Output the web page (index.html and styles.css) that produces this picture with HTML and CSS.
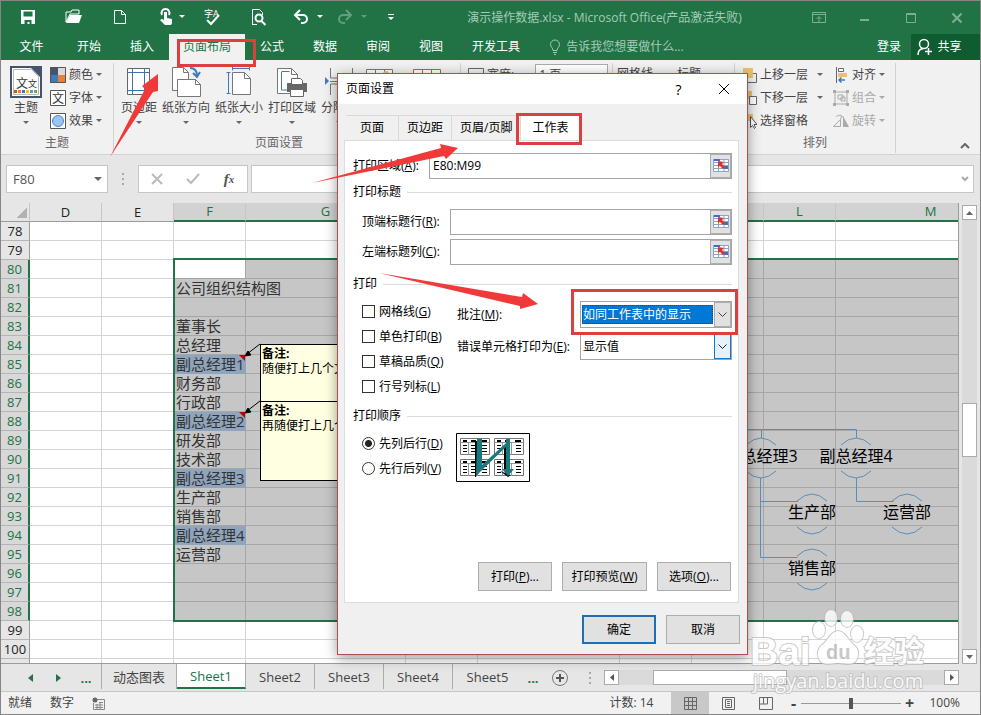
FILE: index.html
```html
<!DOCTYPE html>
<html lang="zh-CN">
<head>
  <meta charset="UTF-8">
  <title>演示操作数据.xlsx - Microsoft Office</title>
  <link rel="stylesheet" href="styles.css">
</head>
<body>
<div class="app">

<header class="titlebar">
  <div class="qat">
    <button aria-label="保存"><svg width="46" height="34" viewBox="0 0 46 34"><path d="M16 9h14v14H16z" fill="#fff"/><path d="M18.500 10.500h9v5h-9zM19.500 19h7v4h-2v-2h-2v2h-3z" fill="#217346"/></svg></button>
    <button aria-label="打开"><svg width="46" height="34" viewBox="0 0 46 34"><path d="M15 21V11h5l1-2h7v4h-9z" fill="none" stroke="#fff"/><path d="M15 22l4-8h12l-3 8z" fill="#fff"/></svg></button>
    <button aria-label="新建"><svg width="46" height="34" viewBox="0 0 46 34"><path d="M17.500 9.500h7l4 4v9h-11zM24.500 9.500v4h4" fill="none" stroke="#fff"/></svg></button>
    <button aria-label="触摸模式"><svg width="46" height="34" viewBox="0 0 46 34"><path d="M19 14a4 4 0 1 1 7 0" fill="none" stroke="#fff" stroke-width="2"/><path d="M21 11h3v6l5 1v4l-1 2h-6l-5-5 2-1 2 1z" fill="#fff"/><path d="M36 14h6l-3 3z" fill="#fff"/></svg></button>
    <button aria-label="拼写检查"><svg width="46" height="34" viewBox="0 0 46 34"><text x="15" y="16" font-size="9" fill="#fff">字A</text><path d="M18 19l4 4 8-9" fill="none" stroke="#fff" stroke-width="2"/></svg></button>
    <button aria-label="打印预览"><svg width="46" height="34" viewBox="0 0 46 34"><path d="M17.500 23V8.500h7l3 3V14M17 23.500h5" fill="none" stroke="#fff"/><circle cx="24" cy="17" r="3.500" fill="none" stroke="#fff" stroke-width="2"/><path d="M26.500 20l4 4" stroke="#fff" stroke-width="2"/></svg></button>
    <button class="narrow" aria-label="撤消"><svg width="44" height="34" viewBox="0 0 44 34"><path d="M19 9l-5 5 5 5M15 14h7a4 4 0 0 1 0 8h-2" fill="none" stroke="#fff" stroke-width="2"/><path d="M36 14h6l-3 3z" fill="#fff"/></svg></button>
    <button class="narrow dim" aria-label="恢复"><svg width="44" height="34" viewBox="0 0 44 34"><path d="M21 9l5 5-5 5M25 14h-7a4 4 0 0 0 0 8h2" fill="none" stroke="#fff" stroke-width="2"/><path d="M36 14h6l-3 3z" fill="#fff"/></svg></button>
    <button class="narrow" aria-label="自定义快速访问工具栏"><svg width="44" height="34" viewBox="0 0 44 34"><path d="M19 13.500h6" stroke="#fff"/><path d="M19 16h6l-3 3z" fill="#fff"/></svg></button>
  </div>
  <div class="title">演示操作数据.xlsx - Microsoft Office(产品激活失败)</div>
  <div class="winbtns">
    <button aria-label="功能区显示选项"><svg width="14" height="12" viewBox="0 0 14 12"><path d="M.5.5h13v10H.5zM.5 2.500h13M7 10V5M4.500 7L7 4.500 9.500 7" fill="none" stroke="currentColor"/></svg></button>
    <button aria-label="最小化"><svg width="10" height="12" viewBox="0 0 10 12"><path d="M0 8h9" stroke="currentColor" stroke-width="2"/></svg></button>
    <button aria-label="最大化"><svg width="10" height="12" viewBox="0 0 10 12"><path d="M.5 1.500h9v9h-9zM0 2.500h10" fill="none" stroke="currentColor"/></svg></button>
    <button aria-label="关闭"><svg width="10" height="12" viewBox="0 0 10 12"><path d="M.5 1.500l9 9M9.500 1.500l-9 9" stroke="currentColor" stroke-width="2"/></svg></button>
  </div>
</header>

<nav class="tabs">
  <button class="file">文件</button>
  <button>开始</button>
  <button>插入</button>
  <button class="active">页面布局</button>
  <button>公式</button>
  <button>数据</button>
  <button>审阅</button>
  <button>视图</button>
  <button>开发工具</button>
  <label class="tellme">
    <svg width="12" height="16" viewBox="0 0 12 16"><path d="M4 11.500C4 9 1.500 8 1.500 5.500a4.500 4.500 0 0 1 9 0C10.500 8 8 9 8 11.500zM4 13.500h4M5 15.500h2" fill="none" stroke="currentColor"/></svg>
    <input type="text" placeholder="告诉我您想要做什么..." aria-label="告诉我您想要做什么">
  </label>
  <button class="login">登录</button>
  <button class="share"><svg width="16" height="18" viewBox="0 0 16 18"><circle cx="7" cy="6" r="4.500" fill="none" stroke="#fff" stroke-width="1.500"/><path d="M1 17c0-4 2-6 5-6.500M8 13.500h7M11.500 10v7" fill="none" stroke="#fff" stroke-width="1.500"/></svg>共享</button>
</nav>

<section class="ribbon">
  <div class="group g-theme">
    <div class="tools">
      <button class="big">
        <svg width="32" height="32" viewBox="0 0 32 32"><path d="M1 1h30v30H1z" fill="#fff" stroke="#44546a" stroke-width="2"/><path d="M3.500 3.500h18l7 7v18h-25z" fill="#fff" stroke="#bbb"/><path d="M21 2h9v9z" fill="#44546a"/><text x="6" y="22" font-size="12" fill="#333">文</text><text x="18" y="21" font-size="9" fill="#333">文</text><path d="M4 24h3v3H4z" fill="#c55a11"/><path d="M8 24h3v3H8z" fill="#ed7d31"/><path d="M12 24h3v3h-3z" fill="#4472c4"/><path d="M16 24h3v3h-3z" fill="#ffc000"/><path d="M20 24h3v3h-3z" fill="#5b9bd5"/><path d="M24 24h3v3h-3z" fill="#70ad47"/></svg>
        <span>主题</span><i class="caret"></i>
      </button>
      <div class="stack">
        <button><svg width="16" height="16" viewBox="0 0 16 16"><path d="M0 0h8v8H0z" fill="#44546a"/><path d="M8 0h8v8H8z" fill="#d9d9d9"/><path d="M0 8h8v8H0z" fill="#3d7ac0"/><path d="M8 8h8v8H8z" fill="#ed7d31"/><path d="M.5.5h15v15H.5z" fill="none" stroke="#555"/></svg><span>颜色</span><i class="caret"></i></button>
        <button><svg width="16" height="16" viewBox="0 0 16 16"><path d="M.5.5h15v15H.5z" fill="#fff" stroke="#555"/><text x="2" y="13" font-size="12" fill="#333">文</text></svg><span>字体</span><i class="caret"></i></button>
        <button><svg width="16" height="16" viewBox="0 0 16 16"><path d="M.5.5h15v15H.5z" fill="#fff" stroke="#555"/><circle cx="8" cy="8" r="5.500" fill="#9dc3f0" stroke="#4a86c8"/></svg><span>效果</span><i class="caret"></i></button>
      </div>
    </div>
    <div class="caption">主题</div>
  </div>
  <div class="group g-page">
    <div class="tools">
      <button class="big"><svg width="24" height="32" viewBox="0 0 24 32"><path d="M.5 2.500h22v26H.5z" fill="#fff" stroke="#666"/><path d="M5.500 3v25M17.500 3v25M1 6.500h21M1 24.500h21" stroke="#4472a8"/></svg><span>页边距</span><i class="caret"></i></button>
      <button class="big"><svg width="30" height="32" viewBox="0 0 30 32"><path d="M1.500 1.500h11l5 5v18h-16z" fill="#fff" stroke="#777"/><path d="M6.500 13.500h18l5 5v12h-23z" fill="#fff" stroke="#777"/><path d="M12.500 1.500v5h5M24.500 13.500v5h5" fill="none" stroke="#777"/><path d="M19 2c4 0 7 2 7 8M22 7l4 4 3-5" fill="none" stroke="#3d7ac0" stroke-width="2"/></svg><span>纸张方向</span><i class="caret"></i></button>
      <button class="big"><svg width="26" height="32" viewBox="0 0 26 32"><path d="M6.500 6.500h12l6 6v16h-18z" fill="#fff" stroke="#777"/><path d="M18.500 6.500v6h6" fill="none" stroke="#777"/><path d="M6 2.500h18M6.500.5v4M23.500.5v4M2.500 6v22M.5 6.500h4M.5 27.500h4" stroke="#3d7ac0"/></svg><span>纸张大小</span><i class="caret"></i></button>
      <button class="big"><svg width="30" height="32" viewBox="0 0 30 32"><path d="M.5 2.500h14l6 6v19H.5z" fill="#fff" stroke="#777"/><path d="M14.500 2.500v6h6" fill="none" stroke="#777"/><path d="M4.500 6v18h7M4.500 5.500h8" fill="none" stroke="#3d7ac0"/><path d="M10 17h20v9H10z" fill="#666"/><path d="M14.500 12.500h9l2 2v4h-11zM13.500 23.500h13v7h-13z" fill="#fff" stroke="#666"/></svg><span>打印区域</span><i class="caret"></i></button>
      <button class="big"><svg width="28" height="32" viewBox="0 0 28 32"><path d="M5.500 2v10h22V2M5.500 29V18h22v11M5 15.500h22" fill="none" stroke="#777"/><path d="M0 11l4 4-4 4z" fill="#3d7ac0"/></svg><span>分隔符</span><i class="caret"></i></button>
      <button class="big"><svg width="28" height="32" viewBox="0 0 28 32"><path d="M.5 3.500h26v24H.5zM9.500 3v24M18.500 3v24" fill="#fff" stroke="#777"/><circle cx="20" cy="8" r="3" fill="#e8b98a"/></svg><span>背景</span></button>
      <button class="big"><svg width="28" height="32" viewBox="0 0 28 32"><path d="M.5 3.500h27v24H.5zM9.500 3v24M18.500 3v24" fill="#fff" stroke="#c0603a"/></svg><span>打印标题</span></button>
    </div>
    <div class="caption">页面设置</div>
  </div>
  <div class="group g-scale">
    <div class="stack">
      <label><svg width="16" height="16" viewBox="0 0 16 16"><path d="M.5 1.500h15v5H.5zM3 9.500h10" fill="none" stroke="#666"/></svg><span>宽度:</span><select><option>1 页</option></select></label>
    </div>
  </div>
  <div class="group g-options">
    <div class="heads"><span>网格线</span><span>标题</span></div>
  </div>
  <div class="group g-arrange">
    <div class="tools">
      <div class="stack wide">
        <button><svg width="16" height="16" viewBox="0 0 16 16"><path d="M2 1h10v10H2z" fill="#eec06f"/><path d="M12 6.500h3.500v9h-9V12" fill="none" stroke="#666"/></svg><span>上移一层</span><i class="caret"></i></button>
        <button><svg width="16" height="16" viewBox="0 0 16 16"><path d="M2 1h9v8H2z" fill="#eec06f"/><path d="M8.500 6.500h7v8h-7z" fill="#fff" stroke="#666"/></svg><span>下移一层</span><i class="caret"></i></button>
        <button><svg width="16" height="16" viewBox="0 0 16 16"><path d="M2 1h10v7H2z" fill="#eec06f"/><path d="M9.500 3.500v11l2-2 2 3 1-1-1.500-3h3z" fill="#fff" stroke="#555"/></svg><span>选择窗格</span></button>
      </div>
      <div class="stack">
        <button><svg width="16" height="16" viewBox="0 0 16 16"><path d="M3.500 0v16" stroke="#666"/><path d="M5.500 1.500h5v3h-5z" fill="#fff" stroke="#666"/><path d="M5 6h9v4H5z" fill="#eec06f"/><path d="M6 13h6M8.500 10.500L6 13l2.500 2.500" fill="none" stroke="#3d7ac0" stroke-width="1.500"/></svg><span>对齐</span><i class="caret"></i></button>
        <button disabled><svg width="16" height="16" viewBox="0 0 16 16"><path d="M2 2h12v12H2zM5 5h5v4H5zM8 7h4v4H8z" fill="none" stroke="#aaa"/><path d="M0 0h3v3H0zM13 0h3v3h-3zM0 13h3v3H0zM13 13h3v3h-3z" fill="#aaa"/></svg><span>组合</span><i class="caret"></i></button>
        <button disabled><svg width="16" height="16" viewBox="0 0 16 16"><path d="M.5 13.500l7-7v7zM3 4c1-2 4-2 6 0M7 1.500L9.500 4 7 6" fill="none" stroke="#aaa"/><path d="M10 3l6 11h-6z" fill="#aaa"/></svg><span>旋转</span><i class="caret"></i></button>
      </div>
    </div>
    <div class="caption">排列</div>
  </div>
  <button class="collapse" aria-label="折叠功能区"><svg width="10" height="6" viewBox="0 0 10 6"><path d="M1 5l4-4 4 4" fill="none" stroke="#666" stroke-width="2"/></svg></button>
</section>

<section class="formulabar">
  <div class="namebox"><input type="text" value="F80" aria-label="名称框"><i class="caret"></i></div>
  <div class="dots"></div>
  <div class="fx">
    <button aria-label="取消"><svg width="12" height="12" viewBox="0 0 12 12"><path d="M1 1l10 10M11 1L1 11" stroke="#bbb" stroke-width="2"/></svg></button>
    <button aria-label="输入"><svg width="14" height="12" viewBox="0 0 14 12"><path d="M1 6l4 4 8-9" fill="none" stroke="#bbb" stroke-width="2"/></svg></button>
    <button aria-label="插入函数" class="fn">f<sub>x</sub></button>
  </div>
  <div class="formula"><input type="text" aria-label="编辑栏"><svg width="8" height="6" viewBox="0 0 8 6"><path d="M1 1l3 3 3-3" fill="none" stroke="#aaa" stroke-width="2"/></svg></div>
</section>

<main class="work">
  <div class="sheet">
    <table>
      <colgroup><col class="c-num"><col class="c-std"><col class="c-std"><col class="c-std"><col class="c-g"><col class="c-std"><col class="c-i"><col class="c-std"><col class="c-std"><col class="c-std"><col class="c-m"></colgroup>
      <thead>
        <tr><th class="corner"></th><th>D</th><th>E</th><th class="on">F</th><th class="on">G</th><th class="on"></th><th class="on"></th><th class="on"></th><th class="on"></th><th class="on">L</th><th class="on">M</th></tr>
      </thead>
      <tbody>
        <tr><th>78</th><td></td><td></td><td></td><td></td><td></td><td></td><td></td><td></td><td></td><td></td></tr>
        <tr><th>79</th><td></td><td></td><td></td><td></td><td></td><td></td><td></td><td></td><td></td><td></td></tr>
        <tr class="sel"><th>80</th><td></td><td></td><td class="cursor"></td><td></td><td></td><td></td><td></td><td></td><td></td><td></td></tr>
        <tr class="sel"><th>81</th><td></td><td></td><td class="spill">公司组织结构图</td><td></td><td></td><td></td><td></td><td></td><td></td><td></td></tr>
        <tr class="sel"><th>82</th><td></td><td></td><td></td><td></td><td></td><td></td><td></td><td></td><td></td><td></td></tr>
        <tr class="sel"><th>83</th><td></td><td></td><td>董事长</td><td></td><td></td><td></td><td></td><td></td><td></td><td></td></tr>
        <tr class="sel"><th>84</th><td></td><td></td><td>总经理</td><td></td><td></td><td></td><td></td><td></td><td></td><td></td></tr>
        <tr class="sel"><th>85</th><td></td><td></td><td class="vp">副总经理1</td><td></td><td></td><td></td><td></td><td></td><td></td><td></td></tr>
        <tr class="sel"><th>86</th><td></td><td></td><td>财务部</td><td></td><td></td><td></td><td></td><td></td><td></td><td></td></tr>
        <tr class="sel"><th>87</th><td></td><td></td><td>行政部</td><td></td><td></td><td></td><td></td><td></td><td></td><td></td></tr>
        <tr class="sel"><th>88</th><td></td><td></td><td class="vp">副总经理2</td><td></td><td></td><td></td><td></td><td></td><td></td><td></td></tr>
        <tr class="sel"><th>89</th><td></td><td></td><td>研发部</td><td></td><td></td><td></td><td></td><td></td><td></td><td></td></tr>
        <tr class="sel"><th>90</th><td></td><td></td><td>技术部</td><td></td><td></td><td></td><td></td><td></td><td></td><td></td></tr>
        <tr class="sel"><th>91</th><td></td><td></td><td class="vp">副总经理3</td><td></td><td></td><td></td><td></td><td></td><td></td><td></td></tr>
        <tr class="sel"><th>92</th><td></td><td></td><td>生产部</td><td></td><td></td><td></td><td></td><td></td><td></td><td></td></tr>
        <tr class="sel"><th>93</th><td></td><td></td><td>销售部</td><td></td><td></td><td></td><td></td><td></td><td></td><td></td></tr>
        <tr class="sel"><th>94</th><td></td><td></td><td class="vp">副总经理4</td><td></td><td></td><td></td><td></td><td></td><td></td><td></td></tr>
        <tr class="sel"><th>95</th><td></td><td></td><td>运营部</td><td></td><td></td><td></td><td></td><td></td><td></td><td></td></tr>
        <tr class="sel"><th>96</th><td></td><td></td><td></td><td></td><td></td><td></td><td></td><td></td><td></td><td></td></tr>
        <tr class="sel"><th>97</th><td></td><td></td><td></td><td></td><td></td><td></td><td></td><td></td><td></td><td></td></tr>
        <tr class="sel"><th>98</th><td></td><td></td><td></td><td></td><td></td><td></td><td></td><td></td><td></td><td></td></tr>
        <tr><th>99</th><td></td><td></td><td></td><td></td><td></td><td></td><td></td><td></td><td></td><td></td></tr>
        <tr><th>100</th><td></td><td></td><td></td><td></td><td></td><td></td><td></td><td></td><td></td><td></td></tr>
        <tr><th></th><td></td><td></td><td></td><td></td><td></td><td></td><td></td><td></td><td></td><td></td></tr>
      </tbody>
    </table>
    <div class="range"></div>
    <div class="note note1"><b>备注:</b><br>随便打上几个文字</div>
    <div class="note note2"><b>备注:</b><br>再随便打上几个文字</div>
    <svg class="shapes" width="958" height="460" viewBox="1 203 958 460">
      <!-- comment markers -->
      <path d="M239 355h6v6zM239 412h6v6z" fill="#c00000"/>
      <path d="M260 344l-13 10M260 401l-13 10" stroke="#000"/>
      <path d="M245 356l3-5 3 4zM245 413l3-5 3 4z" fill="#000" stroke="#000"/>
      <!-- org chart -->
      <g fill="none" stroke="#5b8dbb">
        <path d="M700 429.500h156.500V438M761.500 430v8M760.500 478v79.500h37M761 501.500h37M856.500 478v23.500h37"/>
        <path d="M746 445q15-14 30 0M746 471q15 14 30 0M841 445q15-14 30 0M841 471q15 14 30 0"/>
        <path d="M797 501q15-14 30 0M797 527q15 14 30 0M892 501q15-14 30 0M892 527q15 14 30 0"/>
        <path d="M797 556q15-14 30 0M797 583q15 14 30 0"/>
      </g>
      <g class="names">
        <text x="761" y="462">副总经理3</text>
        <text x="856" y="462">副总经理4</text>
        <text x="812" y="518">生产部</text>
        <text x="907" y="518">运营部</text>
        <text x="812" y="574">销售部</text>
      </g>
    </svg>
  </div>
  <div class="vscroll">
    <button aria-label="向上"><svg width="7" height="4" viewBox="0 0 7 4"><path d="M0 4l3.500-4L7 4z" fill="#666"/></svg></button>
    <div class="track"><div class="thumb"></div></div>
    <button aria-label="向下"><svg width="7" height="4" viewBox="0 0 7 4"><path d="M0 0l3.500 4L7 0z" fill="#666"/></svg></button>
  </div>
</main>

<nav class="sheets">
  <div class="moves">
    <button aria-label="上一张"><svg width="5" height="8" viewBox="0 0 5 8"><path d="M5 0v8L0 4z" fill="#217346"/></svg></button>
    <button aria-label="下一张"><svg width="5" height="8" viewBox="0 0 5 8"><path d="M0 0v8l5-4z" fill="#217346"/></svg></button>
    <button class="more">...</button>
  </div>
  <button class="tab first">动态图表</button>
  <button class="tab active">Sheet1</button>
  <button class="tab">Sheet2</button>
  <button class="tab">Sheet3</button>
  <button class="tab">Sheet4</button>
  <button class="tab last">Sheet5</button>
  <button class="more">...</button>
  <button class="add" aria-label="新工作表"><svg width="16" height="16" viewBox="0 0 16 16"><circle cx="8" cy="8" r="7.500" fill="none" stroke="#777"/><path d="M4 8h8M8 4v8" stroke="#555" stroke-width="2"/></svg></button>
  <div class="dots"></div>
  <div class="hscroll">
    <button aria-label="向左"><svg width="4" height="7" viewBox="0 0 4 7"><path d="M4 0v7L0 3.500z" fill="#555"/></svg></button>
    <div class="track"><div class="thumb"></div></div>
    <button aria-label="向右"><svg width="4" height="7" viewBox="0 0 4 7"><path d="M0 0v7l4-3.500z" fill="#555"/></svg></button>
  </div>
</nav>

<footer class="status">
  <span>就绪</span>
  <span>数字</span>
  <svg width="13" height="13" viewBox="0 0 13 13"><path d="M5 2.500h7.500v10h-11V6M7 5.500h4M3 8h8M3 10.500h8M5 7v5M8 5v7" fill="none" stroke="#888"/><circle cx="3" cy="3" r="2.500" fill="#666"/></svg>
  <span class="count">计数: 14</span>
  <button class="view on" aria-label="普通"><svg width="13" height="13" viewBox="0 0 13 13"><path d="M.5.5h12v12H.5zM4.500 0v13M8.500 0v13M0 4.500h13M0 8.500h13" fill="none" stroke="#666"/></svg></button>
  <button class="view" aria-label="页面布局"><svg width="13" height="13" viewBox="0 0 13 13"><path d="M.5.5h12v12H.5zM3.500 2.500h6v8h-6zM5 4.500h3M5 6.500h3M5 8.500h3" fill="none" stroke="#666"/></svg></button>
  <button class="view" aria-label="分页预览"><svg width="14" height="13" viewBox="0 0 14 13"><path d="M.5.5h13v12H.5zM4.500 0v7M8.500 0v7H0" fill="none" stroke="#666"/></svg></button>
  <button class="zoom" aria-label="缩小">-</button>
  <input type="range" min="0" max="100" value="50" aria-label="显示比例">
  <button class="zoom" aria-label="放大">+</button>
  <span class="percent">100%</span>
</footer>
</div>

<div class="dialog" role="dialog" aria-label="页面设置">
  <div class="dlg-title">
    <span>页面设置</span>
    <button aria-label="帮助">?</button>
    <button aria-label="关闭"><svg width="12" height="12" viewBox="0 0 12 12"><path d="M1 1l10 10M11 1L1 11" stroke="#000"/></svg></button>
  </div>
  <div class="dlg-tabs">
    <button>页面</button><button>页边距</button><button>页眉/页脚</button><button class="active">工作表</button>
  </div>
  <div class="panel">
    <div class="field top">
      <label for="area">打印区域(<u>A</u>):</label>
      <div class="ref"><input id="area" type="text" value="E80:M99"><button aria-label="选择打印区域"><svg width="16" height="14" viewBox="0 0 16 14"><use href="#pick"/></svg></button></div>
    </div>
    <h3>打印标题</h3>
    <div class="field">
      <label for="rows">顶端标题行(<u>R</u>):</label>
      <div class="ref"><input id="rows" type="text"><button aria-label="选择标题行"><svg width="16" height="14" viewBox="0 0 16 14"><use href="#pick"/></svg></button></div>
    </div>
    <div class="field">
      <label for="cols">左端标题列(<u>C</u>):</label>
      <div class="ref"><input id="cols" type="text"><button aria-label="选择标题列"><svg width="16" height="14" viewBox="0 0 16 14"><use href="#pick"/></svg></button></div>
    </div>
    <h3 class="print">打印</h3>
    <div class="options">
      <div class="checks">
        <label><input type="checkbox">网格线(<u>G</u>)</label>
        <label><input type="checkbox">单色打印(<u>B</u>)</label>
        <label><input type="checkbox">草稿品质(<u>Q</u>)</label>
        <label><input type="checkbox">行号列标(<u>L</u>)</label>
      </div>
      <div class="combos">
        <label for="notes">批注(<u>M</u>):</label>
        <div class="combo focus"><select id="notes"><option>如同工作表中的显示</option></select><span class="drop"><svg width="9" height="6" viewBox="0 0 9 6"><path d="M.5.5l4 4 4-4" fill="none" stroke="#444"/></svg></span></div>
        <label for="errors">错误单元格打印为(<u>E</u>):</label>
        <div class="combo hot"><select id="errors"><option>显示值</option></select><span class="drop"><svg width="9" height="6" viewBox="0 0 9 6"><path d="M.5.5l4 4 4-4" fill="none" stroke="#222"/></svg></span></div>
      </div>
    </div>
    <h3 class="order">打印顺序</h3>
    <div class="options">
      <div class="checks">
        <label><input type="radio" name="order" checked>先列后行(<u>D</u>)</label>
        <label><input type="radio" name="order">先行后列(<u>V</u>)</label>
      </div>
      <svg class="preview" width="74" height="49" viewBox="0 0 74 49">
        <defs>
          <g id="page"><path d="M.5.5h29v16H.5z" fill="#fff" stroke="#777"/><path d="M.5 4.500h29M8.500 5v12M17.500 5v12" stroke="#999"/><path d="M3 3h4M11 3h5M21 3h6" stroke="#000" stroke-width="2"/><path d="M3 7.500h4M3 10.500h4M3 13.500h4M11 7.500h5M11 10.500h5M11 13.500h5M22 7.500h5M22 10.500h5M22 13.500h5" stroke="#000"/></g>
          <g id="pick"><path d="M.5 1.500h15v12H.5z" fill="#fff" stroke="#8ba3c7"/><path d="M0 2h7M0 4.500h16M0 7.500h16M0 10.500h16M5.500 1v13M11 1v13" stroke="#8ba3c7"/><path d="M1 1h6v2H1zM11 8h4v3h-4z" fill="#3f6fc0"/><path d="M5 3l6 1-2 2 3 3-2 2-3-3-2 1z" fill="#d8342a"/></g>
        </defs>
        <path d="M.5.5h73v48H.5z" fill="#fff" stroke="#000"/>
        <use href="#page" x="4" y="5"/><use href="#page" x="38" y="5"/><use href="#page" x="4" y="26"/><use href="#page" x="38" y="26"/>
        <path d="M19 8h3v30l-2 6h-1zM48 14h4v24h-4zM44 38l8 6 3-2z" fill="#000"/>
        <path d="M21 6h5v26l24-22V6h4v30h4l-6 7-6-7h4V14L25 38l-5 5z" fill="#17797b"/>
      </svg>
    </div>
    <div class="actions">
      <button>打印(<u>P</u>)...</button><button class="wide">打印预览(<u>W</u>)</button><button>选项(<u>O</u>)...</button>
    </div>
  </div>
  <div class="dlg-foot"><button class="ok">确定</button><button>取消</button></div>
</div>

<svg class="watermark" width="190" height="90" viewBox="745 605 190 90">
  <g class="logo">
    <text x="750" y="665" class="latin">Bai</text>
    <ellipse cx="819" cy="630" rx="6" ry="8"/><ellipse cx="831" cy="618" rx="6" ry="8"/><ellipse cx="847" cy="619" rx="6" ry="8"/><ellipse cx="857" cy="634" rx="6" ry="8"/>
    <path d="M838 631c-7 0-10 10-17 15-6 6-3 18 6 18 6 0 8-1 11-1s6 1 11 1c9 0 12-12 6-18-7-5-10-15-17-15z"/>
    <text x="864" y="662" class="han">经验</text>
    <text x="753" y="688" class="site">jingyan.baidu.com</text>
  </g>
  <text x="826" y="659" class="du">du</text>
</svg>

<svg class="marks" width="981" height="715" viewBox="0 0 981 715">
  <g fill="none" stroke="#dc3f3f" stroke-width="3">
    <path d="M178.500 40.500h76v25h-76zM517.500 114.500h63v29h-63zM572.500 290.500h164v43h-164z"/>
  </g>
  <path d="M110 157l35-68-3-3 16-12v17l-5 1zM312 183l129-35-1-4 18 4-12 11-2-3zM379 273l143 24 1-4 15 11-18 5v-3z" fill="#f03a3a"/>
</svg>
</body>
</html>
```

FILE: styles.css
```css
* { box-sizing: border-box; }
body { margin: 0; font-family: "Open Sans", "Noto Sans CJK SC", sans-serif; font-size: 12px; line-height: 16px; color: #444; overflow: hidden; }
button, input, select { font: inherit; color: inherit; margin: 0; padding: 0; border: 0; background: none; border-radius: 0; }
button { display: flex; align-items: center; justify-content: center; white-space: nowrap; }
svg { display: block; flex: none; }
input { min-width: 0; outline: none; }
.app { height: 100vh; display: flex; flex-direction: column; border: 1px solid #858585; background: #e6e6e6; overflow: hidden; }
.caret { flex: none; width: 0; height: 0; border: 3px solid transparent; border-top-color: #666; border-bottom: 0; }

/* title bar */
.titlebar { display: flex; flex: none; height: 33px; background: #217346; color: #a5cbb5; padding-left: 4px; }
.qat { display: flex; }
.qat button { width: 46px; }
.qat .narrow { width: 44px; }
.qat .dim { opacity: .3; }
.title { flex: 1; text-align: center; line-height: 34px; white-space: nowrap; }
.winbtns { display: flex; color: #7fae93; }
.winbtns button { width: 46px; }

/* ribbon tabs */
.tabs { display: flex; flex: none; gap: 1px; height: 26px; background: #217346; color: #fff; }
.tabs button { padding: 0 14px; }
.tabs .file { width: 61px; }
.tabs .active { background: #f1f1f1; color: #217346; }
.tellme { flex: 1; display: flex; align-items: center; gap: 5px; padding-left: 14px; color: #a5cbb5; }
.tellme input { flex: 1; }
.tellme input::placeholder { color: #a5cbb5; opacity: 1; }
.tabs .login { padding: 0 9px; }
.tabs .share { background: #0e5c2f; width: 69px; gap: 4px; padding: 0 12px 0 0; }

/* ribbon */
.ribbon { display: flex; flex: none; height: 95px; background: #f1f1f1; border-bottom: 1px solid #d2d2d2; padding: 3px 0 1px; }
.group { display: flex; flex-direction: column; flex: none; border-right: 1px solid #d2d2d2; }
.tools { display: flex; }
.caption { margin-top: auto; height: 18px; text-align: center; color: #666; }
.big { flex-direction: column; justify-content: flex-start; min-width: 36px; height: 64px; padding-top: 3px; color: #444; }
.big span { margin: 2px 0 5px; }
.stack { display: flex; flex-direction: column; }
.stack button, .stack label { display: flex; align-items: center; justify-content: flex-start; height: 23px; gap: 3px; white-space: nowrap; }
.stack.wide .caret { margin-left: 6px; }
.stack button:disabled { color: #aaa; }
.stack button:disabled .caret { border-top-color: #aaa; }
.g-theme { width: 113px; }
.g-theme .tools { padding-left: 7px; gap: 6px; }
.g-page { width: 347px; }
.g-page .tools { gap: 5px; padding-left: 7px; }
.g-page .caption { padding-right: 16px; }
.g-scale { width: 152px; padding-left: 7px; }
.g-scale select { appearance: none; width: 73px; height: 22px; margin-left: 18px; padding-left: 3px; border: 1px solid #aaa; background: #fff; }
.g-options { width: 122px; padding: 3px 0 0 4px; }
.heads { display: flex; gap: 24px; }
.g-arrange { width: 161px; }
.g-arrange .tools { gap: 10px; padding-left: 6px; }
.collapse { margin: auto 10px 4px auto; }

/* formula bar */
.formulabar { display: flex; flex: none; align-items: center; height: 48px; padding: 0 6px 0 5px; color: #555; }
.formulabar > div { height: 28px; }
.namebox, .fx, .formula { display: flex; align-items: center; border: 1px solid #c6c6c6; background: #fff; }
.namebox { width: 102px; padding: 0 5px 0 6px; font-size: 13px; }
.namebox input { flex: 1; }
.namebox .caret { border-width: 4px 4px 0; }
.dots { display: flex; align-items: center; justify-content: center; width: 30px; }
.dots::before { content: ""; width: 2px; height: 12px; background: repeating-linear-gradient(#aaa 0 2px, transparent 2px 5px); }
.fx { width: 110px; margin-right: 3px; }
.fx button { flex: 1; }
.fx .fn { font: italic bold 15px "Liberation Serif", serif; color: #555; }
.fn sub { font-size: 11px; }
.formula { flex: 1; padding-right: 4px; }
.formula input { flex: 1; }

/* grid */
.work { display: flex; flex: 1; min-height: 0; }
.sheet { flex: 1; position: relative; overflow: hidden; background: #fff; border-right: 1px solid #9b9b9b; border-bottom: 1px solid #9b9b9b; }
.sheet table { table-layout: fixed; width: 1025px; border-collapse: separate; border-spacing: 0; color: #333; }
.c-num { width: 29px; }
.c-std { width: 72px; }
.c-g { width: 160px; }
.c-i { width: 142px; }
.c-m { width: 190px; }
.sheet th { height: 19px; padding: 0; font-weight: normal; font-size: 13px; line-height: 18px; background: #e6e6e6; color: #222; border-right: 1px solid #9b9b9b; border-bottom: 1px solid #b5b5b5; white-space: nowrap; }
.sheet thead th { border-right-color: #c6c6c6; border-bottom-color: #9b9b9b; }
.sheet thead th.on { background: #d2d2d2; color: #217346; line-height: 17px; border-bottom: 2px solid #217346; }
.sheet .corner { background: linear-gradient(135deg, transparent 50%, #b2b2b2 50%) 15px 4px / 11px 11px no-repeat #e6e6e6; }
.sheet td { height: 19px; padding: 0 0 0 2px; font-size: 15px; line-height: 18px; white-space: nowrap; border-right: 1px solid #d4d4d4; border-bottom: 1px solid #d4d4d4; }
.sheet .sel th { background: #d8d8d8; color: #217346; border-right: 2px solid #217346; }
.sheet .sel td:nth-child(n+4) { background: #c6c6c6; border-color: #a6a6a6; }
.sheet .sel td.cursor:nth-child(4) { background: #fff; }
.sheet .sel td.spill:nth-child(4) { border-right-color: #c6c6c6; }
.sheet .sel td.vp:nth-child(4) { background: #8fa5bd; border-color: #8fa5bd; }
.range { position: absolute; left: 172px; top: 55px; width: 860px; height: 364px; border: 2px solid #217346; }
.note { position: absolute; left: 259px; width: 130px; padding: 1px; background: #ffffe1; border: 1px solid #000; color: #000; line-height: 15px; }
.note1 { top: 141px; height: 58px; }
.note2 { top: 198px; height: 80px; }
.shapes { position: absolute; left: 0; top: 0; }
.names { font-size: 16px; fill: #000; text-anchor: middle; }
.vscroll { width: 21px; display: flex; flex-direction: column; padding: 2px 3px 0; }
.vscroll button, .hscroll button { flex: none; width: 15px; height: 15px; background: #fff; border: 1px solid #ababab; }
.track { flex: 1; background: #dadada; }
.thumb { background: #fff; border: 1px solid #ababab; }
.vscroll .thumb { height: 54px; margin-top: 183px; }

/* sheet tabs */
.sheets { display: flex; flex: none; height: 28px; border-bottom: 1px solid #c6c6c6; font-size: 13px; }
.moves { display: flex; width: 100px; padding-left: 15px; }
.moves button { width: 28px; }
.more { color: #217346; font-weight: bold; }
.tab { width: 69px; height: 25px; border-right: 1px solid #ababab; }
.tab.first { width: 76px; border-left: 1px solid #ababab; }
.tab.active { background: #fff; color: #217346; border-bottom: 2px solid #217346; }
.tab.last { border: 0; }
.sheets > .more { width: 22px; }
.sheets .add { width: 32px; }
.sheets .dots { width: 28px; }
.hscroll { flex: 1; display: flex; align-items: center; padding-right: 21px; }
.hscroll .track, .hscroll .thumb { height: 15px; }
.hscroll .thumb { width: 134px; margin-left: 34px; }

/* status bar */
.status { display: flex; flex: none; align-items: center; height: 22px; padding: 0 20px 0 7px; background: #f1f1f1; }
.status > span { margin-right: 18px; }
.status .count { margin-left: auto; }
.view { width: 38px; height: 22px; }
.view.on { background: #c8c8c8; }
.zoom { width: 16px; font-size: 16px; font-weight: bold; }
.status input { appearance: none; width: 100px; height: 11px; background: linear-gradient(#999, #999) center / 100% 1px no-repeat; }
.status input::-webkit-slider-thumb { appearance: none; width: 4px; height: 11px; background: #555; }
.status .percent { margin: 0 0 0 12px; }

/* page setup dialog */
.dialog { position: absolute; left: 337px; top: 73px; width: 411px; padding-bottom: 10px; background: #f0f0f0; border: 1px solid #a9504a; box-shadow: 0 3px 12px rgba(0,0,0,.4); color: #000; }
.dlg-title { display: flex; height: 30px; line-height: 29px; background: #fff; padding: 0 1px 0 8px; }
.dlg-title span { flex: 1; }
.dlg-title button { width: 45px; font-size: 14px; }
.dlg-tabs { display: flex; margin: 11px 0 0 8px; height: 25px; }
.dlg-tabs button { padding: 0 8px; border-top: 1px solid #d9d9d9; border-right: 1px solid #d9d9d9; }
.dlg-tabs button:first-child { padding: 0 14px; }
.dlg-tabs .active { background: #fff; padding: 0 11px; }
.panel { margin: 0 8px 0 6px; padding: 12px 6px 11px 8px; background: #fff; border: 1px solid #dcdcdc; }
.field { display: flex; align-items: center; padding-left: 9px; margin-bottom: 4px; }
.field label { width: 88px; white-space: nowrap; }
.field.top { padding-left: 0; }
.field.top label { width: 76px; }
.ref { flex: 1; display: flex; height: 26px; border: 1px solid #a5a5a5; }
.ref input { flex: 1; padding-left: 3px; }
.ref button { width: 21px; background: #e1e1e1; border: 1px solid #adadad; align-items: flex-start; padding-top: 3px; }
.panel h3 { display: flex; align-items: center; gap: 6px; margin: 5px 0 9px; font-size: 12px; font-weight: normal; line-height: 16px; }
.panel h3::after { content: ""; flex: 1; border-top: 1px solid #dcdcdc; }
.panel h3.print { margin: 11px 0 7px; }
.panel h3.order { margin: 9px 0 7px; }
.options { display: flex; }
.checks { width: 103px; padding-left: 9px; }
.checks label { display: flex; align-items: center; height: 25px; white-space: nowrap; }
.checks input { appearance: none; flex: none; width: 13px; height: 13px; margin-right: 4px; border: 1px solid #333; background: #fff; }
.checks input[type=radio] { border-radius: 50%; }
.checks input[type=radio]:checked { background: radial-gradient(circle, #222 3px, #fff 4px); }
.combos { flex: 1; display: grid; grid-template-columns: 123px 1fr; grid-auto-rows: 27px; gap: 5px 0; align-items: center; margin: 2px 0 0 1px; white-space: nowrap; align-content: start; }
.combo { display: flex; height: 27px; border: 1px solid #a5a5a5; background: #fff; }
.combo select { appearance: none; flex: 1; min-width: 0; margin: 3px 1px 3px 1px; padding-left: 1px; }
.combo.focus select { background: #0078d7; color: #fff; outline: 1px dotted #444; outline-offset: -1px; }
.drop { display: flex; align-items: center; justify-content: center; width: 17px; background: #e1e1e1; border: 1px solid #adadad; }
.hot .drop { background: #e5f1fb; border-color: #1a78c2; }
.preview { margin-top: 2px; }
.actions, .dlg-foot { display: flex; justify-content: flex-end; gap: 10px; }
.actions { margin: 80px 1px 0 0; }
.actions button, .dlg-foot button { width: 74px; height: 29px; background: #e1e1e1; border: 1px solid #adadad; }
.actions .wide { width: 85px; }
.dlg-foot { margin: 12px 7px 0 0; }
.dlg-foot .ok { border: 2px solid #1a6fb5; }

/* overlays */
.watermark { position: absolute; left: 745px; top: 605px; opacity: .8; }
.logo { fill: #fff; stroke: #bdbdbd; stroke-width: 2px; paint-order: stroke; }
.logo .latin { font: bold 39px "Liberation Sans", sans-serif; }
.logo .han { font-size: 30px; font-weight: bold; }
.logo .site { font-size: 20px; }
.du { font: bold 20px "Liberation Sans", sans-serif; fill: #bbb; }
.marks { position: absolute; left: 0; top: 0; pointer-events: none; }
```
